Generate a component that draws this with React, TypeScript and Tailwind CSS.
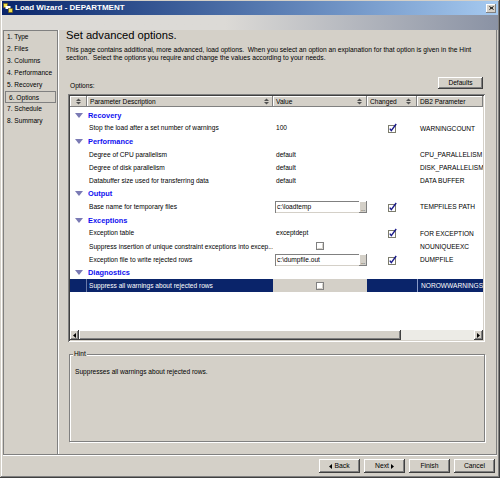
import React from "react";

type Row =
  | { kind: "cat"; label: string }
  | {
      kind: "opt";
      desc: string;
      value?: string;
      input?: string;
      box?: boolean;
      changed?: boolean;
      param: string;
      selected?: boolean;
    };

const rows: Row[] = [
  { kind: "cat", label: "Recovery" },
  { kind: "opt", desc: "Stop the load after a set number of warnings", value: "100", changed: true, param: "WARNINGCOUNT" },
  { kind: "cat", label: "Performance" },
  { kind: "opt", desc: "Degree of CPU parallelism", value: "default", param: "CPU_PARALLELISM" },
  { kind: "opt", desc: "Degree of disk parallelism", value: "default", param: "DISK_PARALLELISM" },
  { kind: "opt", desc: "Databuffer size used for transferring data", value: "default", param: "DATA BUFFER" },
  { kind: "cat", label: "Output" },
  { kind: "opt", desc: "Base name for temporary files", input: "c:\\loadtemp", changed: true, param: "TEMPFILES PATH" },
  { kind: "cat", label: "Exceptions" },
  { kind: "opt", desc: "Exception table", value: "exceptdept", changed: true, param: "FOR EXCEPTION" },
  { kind: "opt", desc: "Suppress insertion of unique constraint exceptions into excep...", box: true, param: "NOUNIQUEEXC" },
  { kind: "opt", desc: "Exception file to write rejected rows", input: "c:\\dumpfile.out", changed: true, param: "DUMPFILE" },
  { kind: "cat", label: "Diagnostics" },
  { kind: "opt", desc: "Suppress all warnings about rejected rows", box: true, param: "NOROWWARNINGS", selected: true },
];

const steps = ["1. Type", "2. Files", "3. Columns", "4. Performance", "5. Recovery", "6. Options", "7. Schedule", "8. Summary"];

const raised =
  "shadow-[inset_-1px_-1px_0_#404040,inset_1px_1px_0_#ffffff,inset_-2px_-2px_0_#808080,inset_2px_2px_0_#d4d0c8]";
const headRaised = "shadow-[inset_-1px_-1px_0_#808080,inset_1px_1px_0_#ffffff]";

function SortIcon() {
  return (
    <svg width="5" height="7" viewBox="0 0 5 7" className="shrink-0">
      <path d="M0 3 L2.5 0.5 L5 3 Z" fill="#505050" />
      <path d="M0 4 L2.5 6.5 L5 4 Z" fill="#505050" />
    </svg>
  );
}

function CheckMark() {
  return (
    <svg width="10" height="10" viewBox="0 0 10 10">
      <rect x="1.5" y="2.5" width="7" height="7" fill="#ffffff" stroke="#7c7c6c" />
      <path d="M2.8 5.6 L4.3 7.6 L9.2 1" fill="none" stroke="#1a1a8a" strokeWidth="1.4" />
    </svg>
  );
}

function EmptyBox() {
  return (
    <svg width="8" height="8" viewBox="0 0 8 8">
      <rect x="0.5" y="0.5" width="7" height="7" fill="#ffffff" stroke="#808080" />
      <path d="M1.5 6.5 H6.5 V1.5" fill="none" stroke="#d4d0c8" />
    </svg>
  );
}

function FileInput({ text }: { text: string }) {
  return (
    <div className="ml-[2px] flex h-[12px] w-[92px] bg-white shadow-[inset_1px_1px_0_#808080,inset_-1px_-1px_0_#d4d0c8]">
      <span className="flex-1 pl-[2px] leading-[12px] overflow-hidden whitespace-nowrap">{text}</span>
      <div className={`w-[8px] h-[12px] bg-[#d4d0c8] flex items-end justify-center text-[5px] leading-[8px] ${headRaised}`}>...</div>
    </div>
  );
}

function WinButton({ children, w }: { children: React.ReactNode; w: string }) {
  return (
    <div className={`flex items-center justify-center gap-[2px] bg-[#d4d0c8] ${w} ${raised}`}>{children}</div>
  );
}

export default function App() {
  return (
    <div className="relative flex h-[478px] w-[500px] flex-col overflow-hidden bg-[#d4d0c8] font-['Liberation_Sans',Arial,sans-serif] text-[6.6px] text-black shadow-[inset_-1px_-1px_0_#404040,inset_1px_1px_0_#d4d0c8,inset_-2px_-2px_0_#808080,inset_2px_2px_0_#ffffff]">
      {/* Title bar */}
      <div className="mx-[2px] mt-[1px] flex h-[14px] items-center bg-linear-to-r from-[#0a246a] to-[#a6caf0]">
        <svg width="10" height="10" viewBox="0 0 10 10" className="ml-[1px]">
          <rect x="0.5" y="0.5" width="4" height="4" fill="#f4e04a" stroke="#6b5a10" strokeWidth="0.6" />
          <rect x="2.5" y="3" width="5" height="3" fill="#ffffff" />
          <rect x="5.5" y="5.5" width="4" height="4" fill="#f4e04a" stroke="#6b5a10" strokeWidth="0.6" />
        </svg>
        <span className="ml-[2px] text-[8px] font-bold leading-[14px] text-white">Load Wizard - DEPARTMENT</span>
        <div className={`ml-auto mr-[2px] flex h-[9px] w-[10px] items-center justify-center bg-[#d4d0c8] ${headRaised}`}>
          <svg width="5" height="4" viewBox="0 0 5 4">
            <path d="M0.5 0.5 L4.5 3.5 M4.5 0.5 L0.5 3.5" stroke="#000" strokeWidth="1" />
          </svg>
        </div>
      </div>

      {/* Banner */}
      <div className="mx-[2px] h-[15px] bg-linear-to-r from-[#dcdad6] from-45% to-[#8a92a4]" />

      {/* Main */}
      <div className="mx-[3px] flex h-[424px] border-r border-[#808080]">
        {/* Steps */}
        <div className="flex w-[56px] flex-col border-l border-t border-r border-[#808080] shadow-[1px_0_0_#ffffff]">
          {steps.map((s) => (
            <div
              key={s}
              className={`h-[12px] pl-[3px] leading-[12px] whitespace-nowrap ${
                s === "6. Options" ? "mx-[1px] border border-[#808080] pl-[2px] leading-[10px]" : ""
              }`}
            >
              {s}
            </div>
          ))}
        </div>

        {/* Content */}
        <div className="flex flex-1 flex-col pl-[8px] pr-[11px]">
          <div className="-mt-[1px] text-[11.2px] leading-[13px]">Set advanced options.</div>
          <div className="mt-[4px] text-[6.7px] leading-[7.5px] whitespace-nowrap">
            This page contains additional, more advanced, load options.&nbsp; When you select an option an explanation for that option is given in the Hint
            <br />
            section.&nbsp; Select the options you require and change the values according to your needs.
          </div>

          <div className="mt-[16px] flex h-[17px] justify-between">
            <span className="ml-[4px] mt-[5px] leading-[8px]">Options:</span>
            <div className="mr-[2px]">
              <WinButton w="w-[45px] h-[12px]">Defaults</WinButton>
            </div>
          </div>

          {/* Table */}
          <div className="ml-[2px] flex h-[248px] w-[417px] flex-col bg-white p-[2px] shadow-[inset_1px_1px_0_#808080,inset_-1px_-1px_0_#ffffff,inset_2px_2px_0_#404040,inset_-2px_-2px_0_#d4d0c8]">
            <div className="flex h-[11px] bg-[#d4d0c8] leading-[11px]">
              <div className={`flex w-[17px] items-center justify-center ${headRaised}`}>
                <SortIcon />
              </div>
              <div className={`flex w-[186px] items-center justify-between pl-[3px] pr-[4px] ${headRaised}`}>
                <span>Parameter Description</span>
                <SortIcon />
              </div>
              <div className={`flex w-[94px] items-center justify-between pl-[3px] pr-[5px] ${headRaised}`}>
                <span>Value</span>
                <SortIcon />
              </div>
              <div className={`flex w-[50px] items-center justify-between pl-[3px] pr-[6px] ${headRaised}`}>
                <span>Changed</span>
                <SortIcon />
              </div>
              <div className={`flex w-[66px] items-center pl-[3px] whitespace-nowrap overflow-hidden ${headRaised}`}>
                <span>DB2 Parameter</span>
              </div>
            </div>

            <div className="flex-1 overflow-hidden pt-[1.5px]">
              {rows.map((r, i) =>
                r.kind === "cat" ? (
                  <div key={i} className="flex h-[13.15px] items-center">
                    <div className="flex w-[17px] justify-start pl-[5px]">
                      <svg width="8" height="5" viewBox="0 0 8 5">
                        <path d="M0 0 H8 L4 5 Z" fill="#7a7ab4" />
                      </svg>
                    </div>
                    <span className="pl-[1px] text-[7.4px] font-bold text-[#1010f0]">{r.label}</span>
                  </div>
                ) : (
                  <div
                    key={i}
                    className={`flex h-[13.15px] items-center ${r.selected ? "bg-[#0a246a] text-white" : ""}`}
                  >
                    <div className={`h-full w-[17px] ${r.selected ? "border-r border-[#6a7aa8]" : ""}`} />
                    <div className="w-[186px] overflow-hidden whitespace-nowrap pl-[2px]">{r.desc}</div>
                    <div
                      className={`flex h-full w-[94px] items-center ${
                        r.selected ? "bg-[#d4d0c8] text-black" : ""
                      } ${r.box ? "justify-center" : ""}`}
                    >
                      {r.value && <span className="pl-[3px]">{r.value}</span>}
                      {r.input && <FileInput text={r.input} />}
                      {r.box && <EmptyBox />}
                    </div>
                    <div className="flex w-[50px] justify-center">{r.changed && <CheckMark />}</div>
                    <div
                      className={`h-full w-[66px] overflow-hidden whitespace-nowrap pl-[3px] leading-[13.15px] ${
                        r.selected ? "border-l border-[#8a9ac8] pl-[2px]" : ""
                      }`}
                    >
                      {r.param}
                    </div>
                  </div>
                )
              )}
            </div>

            {/* Horizontal scrollbar */}
            <div className="flex h-[10px]">
              <div className={`flex w-[9px] items-center justify-center bg-[#d4d0c8] ${raised}`}>
                <svg width="3" height="5" viewBox="0 0 3 5">
                  <path d="M3 0 V5 L0 2.5 Z" fill="#000" />
                </svg>
              </div>
              <div className={`w-[322px] bg-[#d4d0c8] ${raised}`} />
              <div className="flex-1 bg-[#ecebe6]" />
              <div className={`flex w-[9px] items-center justify-center bg-[#d4d0c8] ${raised}`}>
                <svg width="3" height="5" viewBox="0 0 3 5">
                  <path d="M0 0 V5 L3 2.5 Z" fill="#000" />
                </svg>
              </div>
            </div>
          </div>

          {/* Hint */}
          <div className="relative ml-[3px] mt-[12px] h-[88px] w-[416px] border border-[#808080] shadow-[inset_1px_1px_0_#ffffff,1px_1px_0_#ffffff]">
            <span className="absolute -top-[5px] left-[3px] bg-[#d4d0c8] px-[1px] leading-[8px]">Hint</span>
            <div className="pl-[5px] pt-[13px] leading-[8px]">Suppresses all warnings about rejected rows.</div>
          </div>
        </div>
      </div>

      {/* Separator */}
      <div className="mx-[3px] h-[2px] border-t border-b border-t-[#808080] border-b-[#ffffff]" />

      {/* Buttons */}
      <div className="flex h-[22px] justify-end gap-[4px] pr-[5px] pt-[3px]">
        <div className="h-[14px]">
          <WinButton w="w-[41px] h-[14px]">
            <svg width="3" height="5" viewBox="0 0 3 5">
              <path d="M3 0 V5 L0 2.5 Z" fill="#000" />
            </svg>
            <span className="text-[6.8px]">Back</span>
          </WinButton>
        </div>
        <div className="h-[14px]">
          <WinButton w="w-[41px] h-[14px]">
            <span className="text-[6.8px]">Next</span>
            <svg width="3" height="5" viewBox="0 0 3 5">
              <path d="M0 0 V5 L3 2.5 Z" fill="#000" />
            </svg>
          </WinButton>
        </div>
        <div className="h-[14px]">
          <WinButton w="w-[41px] h-[14px]">
            <span className="text-[6.8px]">Finish</span>
          </WinButton>
        </div>
        <div className="h-[14px]">
          <WinButton w="w-[41px] h-[14px]">
            <span className="text-[6.8px]">Cancel</span>
          </WinButton>
        </div>
      </div>
    </div>
  );
}
